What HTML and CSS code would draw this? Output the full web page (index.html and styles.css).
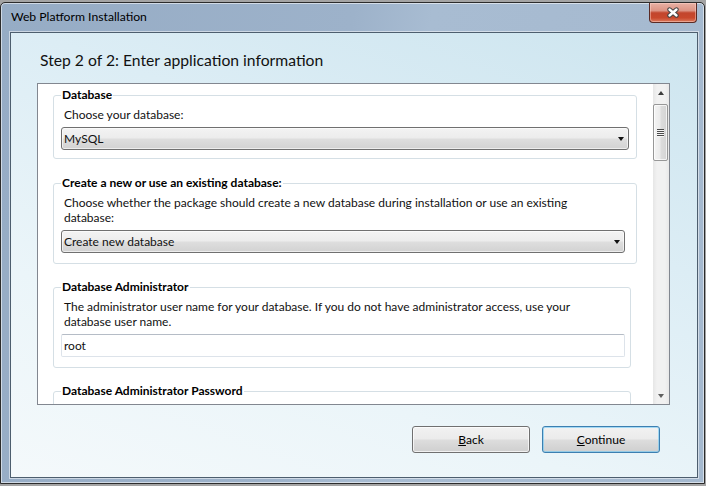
FILE: index.html
```html
<!DOCTYPE html>
<html lang="en">
  <head>
    <meta charset="UTF-8" />
    <meta name="viewport" content="width=device-width, initial-scale=1.0" />
    <title>Web Platform Installation</title>
    <link rel="stylesheet" href="styles.css">
  </head>
  <body>
    <div class="window">
      <div class="titlebar">
        <span class="title">Web Platform Installation</span>
        <button class="close-btn" type="button" aria-label="Close">
          <svg width="14" height="11" viewBox="0 0 14 11">
            <path d="M3.5 2.5 L10.5 8.5 M10.5 2.5 L3.5 8.5" stroke="#434343" stroke-width="4.4" stroke-linecap="round" fill="none" />
            <path d="M3.5 2.5 L10.5 8.5 M10.5 2.5 L3.5 8.5" stroke="#fff" stroke-width="2.4" stroke-linecap="round" fill="none" />
          </svg>
        </button>
      </div>

      <div class="client">
        <h2 class="step-title">Step 2 of 2: Enter application information</h2>

        <div class="scroll-panel">
          <div class="scroll-content">
            <fieldset class="group group-first">
              <legend>Database</legend>
              <p class="hint">Choose your database:</p>
              <div class="combo">
                <select>
                  <option>MySQL</option>
                  <option>SQL Server</option>
                </select>
              </div>
            </fieldset>

            <fieldset class="group group-spaced">
              <legend>Create a new or use an existing database:</legend>
              <p class="hint">Choose whether the package should create a new database during installation or use an existing database:</p>
              <div class="combo combo-short">
                <select>
                  <option>Create new database</option>
                  <option>Use existing database</option>
                </select>
              </div>
            </fieldset>

            <fieldset class="group group-narrow group-spaced">
              <legend>Database Administrator</legend>
              <p class="hint">The administrator user name for your database. If you do not have administrator access, use your database user name.</p>
              <input class="text-field" type="text" value="root" />
            </fieldset>

            <fieldset class="group group-narrow group-spaced">
              <legend>Database Administrator Password</legend>
              <input class="text-field field-spaced" type="password" value="" />
            </fieldset>
          </div>

          <div class="scrollbar">
            <div class="scroll-arrow"><span class="arrow-up"></span></div>
            <div class="scroll-thumb"><span class="grip"></span></div>
            <div class="scroll-track"></div>
            <div class="scroll-arrow"><span class="arrow-down"></span></div>
          </div>
        </div>

        <div class="actions">
          <button class="btn" type="button"><u>B</u>ack</button>
          <button class="btn btn-default" type="button"><u>C</u>ontinue</button>
        </div>
      </div>
    </div>
  </body>
</html>
```

FILE: styles.css
```css
body {
  margin: 0;
  background-color: #a4a4a4;
  font-family: Lato, "Noto Sans", sans-serif;
  font-size: 12px;
  color: #111;
}

/* window frame */
.window {
  width: 705px;
  height: 482px;
  margin-top: 2px;
  box-sizing: border-box;
  border: 1px solid #2c2c2c;
  border-radius: 5px 5px 0 0;
  background: linear-gradient(100deg, #96acc5 0%, #9db2ca 45%, #a8bcd2 55%, #a5b9cf 100%);
  box-shadow: inset 0 0 0 1px rgba(255, 255, 255, 0.55);
  display: flex;
  flex-direction: column;
}
.titlebar {
  height: 29px;
  display: flex;
  align-items: flex-start;
  padding-left: 10px;
}
.title {
  padding-top: 6px;
  line-height: 16px;
  font-size: 12.2px;
  color: #000;
}
.close-btn {
  margin-left: auto;
  margin-right: 7px;
  width: 48px;
  height: 20px;
  padding: 0;
  border: 1px solid #5a2a24;
  border-top: none;
  border-radius: 0 0 4px 4px;
  background: linear-gradient(#e8b1a5 0%, #dc9484 40%, #c2462d 52%, #c8482c 78%, #dc7b5f 100%);
  box-shadow: inset 0 0 0 1px rgba(255, 220, 210, 0.45);
  display: flex;
  align-items: center;
  justify-content: center;
}

/* client area */
.client {
  flex: 1;
  margin: 0 6px 5px 9px;
  border: 1px solid #4d5e6e;
  box-shadow: 0 0 0 1px rgba(255, 255, 255, 0.5);
  background: linear-gradient(200deg, #cde5ef 0%, #dcedf5 35%, #ebf5f9 70%, #f4f9fb 100%);
  display: flex;
  flex-direction: column;
}
.step-title {
  margin: 0;
  padding: 17px 0 0 29px;
  font-size: 15.7px;
  font-weight: normal;
  line-height: 20px;
  color: #111;
}

.scroll-panel {
  margin: 13px 0 0 26px;
  width: 633px;
  height: 322px;
  box-sizing: border-box;
  border: 1px solid #828790;
  background-color: #fff;
  display: flex;
}
.scroll-content {
  flex: 1;
  overflow: hidden;
  padding-top: 3px;
}

/* group boxes */
.group {
  margin: 0 16px 0 15px;
  min-width: 0;
  padding: 0 7px 8px 7px;
  border: 1px solid #d5dfe5;
  border-radius: 3px;
}
.group legend {
  padding: 0 1px;
  font-weight: bold;
  line-height: 16px;
  color: #000;
}
.group-spaced {
  margin-top: 15px;
  padding-bottom: 10px;
}
.group-first + .group-spaced {
  margin-top: 16px;
}
.group-narrow {
  margin-right: 22px;
  padding-right: 5px;
}
.hint {
  margin: 4px 0 5px 3px;
  max-width: 556px;
  line-height: 15px;
}

.combo {
  position: relative;
}
.combo-short {
  margin-right: 4px;
}
.combo select {
  width: 100%;
  height: 23px;
  box-sizing: border-box;
  appearance: none;
  border: 1px solid #707070;
  border-radius: 3px;
  padding: 0 2px;
  font: inherit;
  color: #111;
  background: linear-gradient(#f3f3f3 0%, #ececec 48%, #dedede 52%, #d2d2d2 100%);
  box-shadow: inset 0 0 0 1px rgba(255, 255, 255, 0.6);
}
.combo::after {
  content: "";
  position: absolute;
  right: 5px;
  top: 10px;
  border-top: 4px solid #111;
  border-left: 3.5px solid transparent;
  border-right: 3.5px solid transparent;
}
.text-field {
  width: 100%;
  height: 23px;
  box-sizing: border-box;
  border: 1px solid #dde3ea;
  border-top-color: #b5bcc6;
  border-radius: 2px;
  padding: 0 2px;
  font: inherit;
  color: #111;
}
.field-spaced {
  margin-top: 24px;
}

/* scrollbar */
.scrollbar {
  width: 16px;
  background: linear-gradient(to right, #e6e6e6, #f1f1f1 25%, #f1f1f1 75%, #e8e8e8);
  display: flex;
  flex-direction: column;
}
.scroll-arrow {
  height: 17px;
  display: flex;
  align-items: center;
  justify-content: center;
}
.arrow-up {
  border-bottom: 4px solid #3c3c3c;
  border-left: 3.5px solid transparent;
  border-right: 3.5px solid transparent;
}
.arrow-down {
  border-top: 4px solid #5f5f5f;
  border-left: 3.5px solid transparent;
  border-right: 3.5px solid transparent;
}
.scroll-thumb {
  margin-top: 3px;
  width: 15px;
  height: 57px;
  box-sizing: border-box;
  border: 1px solid #979797;
  border-radius: 2px;
  background: linear-gradient(to right, #f4f4f4, #ebebeb 45%, #dcdcdc 55%, #d4d4d4);
  box-shadow: inset 0 0 0 1px rgba(255, 255, 255, 0.7);
  display: flex;
  align-items: center;
  justify-content: center;
}
.grip {
  width: 7px;
  height: 8px;
  background: repeating-linear-gradient(#4a4a4a 0 1px, #f6f6f6 1px 2px);
}
.scroll-track {
  flex: 1;
}

/* dialog buttons */
.actions {
  display: flex;
  justify-content: flex-end;
  gap: 12px;
  margin: 21px 37px 0 0;
}
.btn {
  width: 118px;
  height: 27px;
  padding: 0;
  border: 1px solid #707070;
  border-radius: 3px;
  background: linear-gradient(#f2f2f2 0%, #ebebeb 48%, #dddddd 52%, #cfcfcf 100%);
  box-shadow: inset 0 0 0 1px rgba(255, 255, 255, 0.7);
  font: inherit;
  color: #000;
}
.btn-default {
  border-color: #3c7fb1;
  box-shadow: inset 0 0 0 1px rgba(110, 200, 245, 0.6);
}
```
